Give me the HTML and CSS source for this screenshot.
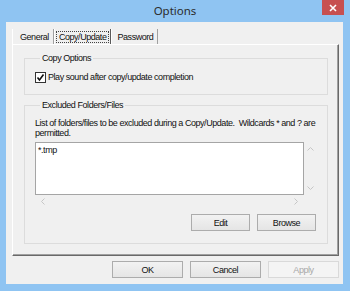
FILE: index.html
```html
<!DOCTYPE html>
<html lang="en">
<head>
    <meta charset="UTF-8">
    <title>Options</title>
    <link rel="stylesheet" href="styles.css">
</head>
<body>

    <div class="window">
        <!-- Titelleiste -->
        <div class="titlebar">
            <span></span>
            <span class="title">Options</span>
            <span class="close">
                <svg width="8" height="8" viewBox="0 0 8 8"><path d="M1 1 L7 7 M7 1 L1 7" stroke="#fff" stroke-width="1.6"/></svg>
            </span>
        </div>

        <div class="client">
            <!-- Reiter -->
            <div class="tabs">
                <div class="tab">General</div>
                <div class="tab active"><span class="focus">Copy/Update</span></div>
                <div class="tab">Password</div>
            </div>

            <div class="panel">
                <fieldset class="group group-copy">
                    <legend>Copy Options</legend>
                    <label class="check">
                        <span class="box">
                            <svg width="9" height="9" viewBox="0 0 9 9"><path d="M1.5 4.5 L3.5 7 L7.5 1.5" fill="none" stroke="#111" stroke-width="1.6"/></svg>
                        </span>
                        Play sound after copy/update completion
                    </label>
                </fieldset>

                <fieldset class="group group-excl">
                    <legend>Excluded Folders/Files</legend>
                    <p class="desc">List of folders/files to be excluded during a Copy/Update.&nbsp; Wildcards * and ? are<br>permitted.</p>

                    <div class="listbox">
                        <div class="list-edit">*.tmp</div>
                        <div class="vscroll">
                            <svg width="7" height="4" viewBox="0 0 7 4"><polyline points="0.5,3.5 3.5,0.5 6.5,3.5" fill="none" stroke="#c6c6c6"/></svg>
                            <svg width="7" height="4" viewBox="0 0 7 4"><polyline points="0.5,0.5 3.5,3.5 6.5,0.5" fill="none" stroke="#c6c6c6"/></svg>
                        </div>
                        <div class="hscroll">
                            <svg width="4" height="7" viewBox="0 0 4 7"><polyline points="3.5,0.5 0.5,3.5 3.5,6.5" fill="none" stroke="#c6c6c6"/></svg>
                            <svg width="4" height="7" viewBox="0 0 4 7"><polyline points="0.5,0.5 3.5,3.5 0.5,6.5" fill="none" stroke="#c6c6c6"/></svg>
                        </div>
                        <div class="corner"></div>
                    </div>

                    <div class="group-buttons">
                        <button class="btn small">Edit</button>
                        <button class="btn small">Browse</button>
                    </div>
                </fieldset>
            </div>

            <!-- Dialog-Buttons -->
            <div class="dialog-buttons">
                <button class="btn">OK</button>
                <button class="btn">Cancel</button>
                <button class="btn disabled">Apply</button>
            </div>
        </div>
    </div>

</body>
</html>
```

FILE: styles.css
```css
/* Fenster mit blauem Rahmen */
body {
    margin: 0;
    background-color: #8fc4f2;
    font-family: "Liberation Sans", Arial, sans-serif;
    font-size: 9px;
    letter-spacing: -0.45px;
    color: #111;
}

.window {
    width: 350px;
    height: 291px;
    background-color: #8fc4f2;
    display: flex;
    flex-direction: column;
}

.titlebar {
    height: 22px;
    display: grid;
    grid-template-columns: 1fr auto 1fr;
}

.title {
    font-family: "Noto Sans", "Liberation Sans", sans-serif;
    font-size: 11.5px;
    letter-spacing: 0;
    color: #2b2b2b;
    line-height: 22px;
}

.close {
    justify-self: end;
    margin-right: 6px;
    width: 22px;
    height: 15px;
    background-color: #c75050;
    display: flex;
    align-items: center;
    justify-content: center;
}

/* Innenbereich des Dialogs */
.client {
    margin: 0 7px 0 6px;
    height: 262px;
    background-color: #f0f0f0;
    padding: 7px 4px 0 6px;
    box-sizing: border-box;
}

.tabs {
    display: flex;
    height: 15px;
}

.tab {
    padding: 2px 4px 0 7px;
    line-height: 12px;
    border-left: 1px solid #fff;
    border-right: 1px solid #a0a0a0;
}

.tab.active {
    padding: 2px 1px 0 1px;
    border-right-color: #5a5a5a;
}

.tab:last-child {
    padding-left: 5px;
}

.focus {
    display: block;
    padding: 0 2px;
    line-height: 10px;
    border: 1px dotted #444;
}

.panel {
    height: 212px;
    box-sizing: border-box;
    border: 1px solid;
    border-color: #fff #696969 #696969 #fff;
    box-shadow: inset -1px -1px 0 #a0a0a0;
    padding: 8px 10px 0 11px;
}

/* Gruppenrahmen */
.group {
    margin: 0;
    min-width: 0;
    box-sizing: border-box;
    border: 1px solid #dcdcdc;
    padding: 0 11px 0 10px;
}

.group legend {
    padding: 0 2px;
    margin-left: 5px;
    line-height: 11px;
}

.group-copy {
    height: 42px;
    padding-top: 8px;
}

.group-excl {
    margin-top: 5px;
    height: 144px;
    padding-top: 7px;
}

.check {
    display: flex;
    align-items: center;
    gap: 2px;
    line-height: 11px;
}

.box {
    width: 9px;
    height: 9px;
    border: 1px solid #333;
    background-color: #fff;
    display: flex;
    align-items: center;
    justify-content: center;
}

.desc {
    margin: 0;
    line-height: 10px;
    white-space: nowrap;
}

/* Liste mit deaktivierten Bildlaufleisten */
.listbox {
    margin-top: 4px;
    display: grid;
    grid-template-columns: 1fr 12px;
    grid-template-rows: 53px 12px;
}

.list-edit {
    background-color: #fff;
    border: 1px solid #a5a5a5;
    padding: 2px 2px;
    line-height: 10px;
}

.vscroll {
    display: flex;
    flex-direction: column;
    justify-content: space-between;
    align-items: center;
    padding: 5px 0 5px 1px;
}

.hscroll {
    display: flex;
    justify-content: space-between;
    align-items: center;
    padding: 0 6px 0 6px;
}

.group-buttons {
    margin-top: 7px;
    display: flex;
    justify-content: flex-end;
    gap: 7px;
}

/* Buttons im Windows-8-Stil */
.btn {
    width: 71px;
    height: 17px;
    padding: 0;
    font-family: inherit;
    font-size: 9px;
    letter-spacing: -0.45px;
    color: #111;
    border: 1px solid #acacac;
    background: linear-gradient(#f2f2f2, #e5e5e5);
}

.btn.small {
    width: 59px;
}

.btn.disabled {
    color: #a8a8a8;
    border-color: #d9d9d9;
    background: #f4f4f4;
}

.dialog-buttons {
    margin-top: 5px;
    display: flex;
    justify-content: flex-end;
    gap: 7px;
}
```
